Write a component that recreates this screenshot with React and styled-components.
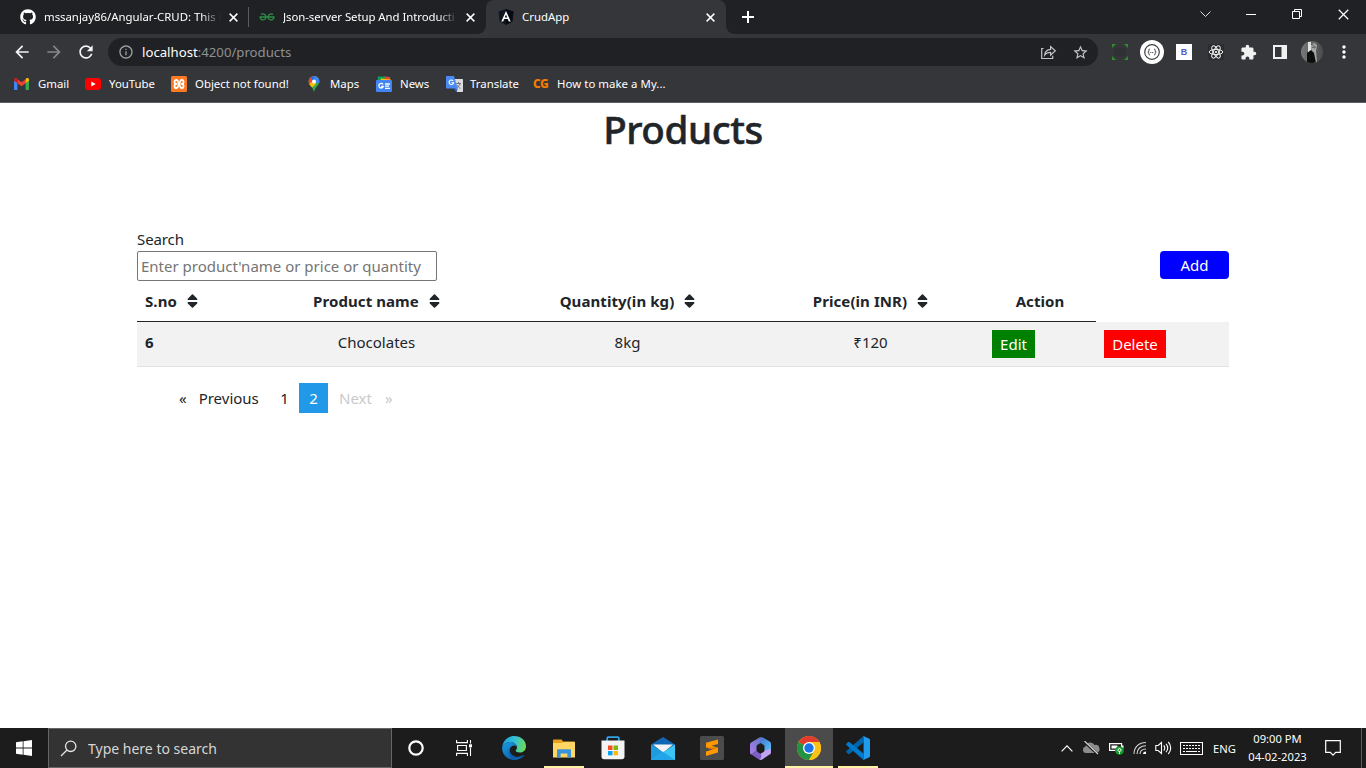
import React from "react";
import styled, { createGlobalStyle, css } from "styled-components";
import { FaGithub } from "react-icons/fa";
import {
  MdArrowBack,
  MdArrowForward,
  MdRefresh,
  MdInfoOutline,
  MdStarOutline,
  MdExtension,
  MdMoreVert,
} from "react-icons/md";

const GlobalStyle = createGlobalStyle`
  * { box-sizing: border-box; }
  body {
    margin: 0;
    background: #fff;
    font-family: "Noto Sans", "Open Sans", sans-serif;
    overflow: hidden;
  }
  svg { display: block; flex: none; }
`;

const Screen = styled.div`
  width: 1366px;
  height: 768px;
  display: flex;
  flex-direction: column;
`;

const Txt = styled.span`
  letter-spacing: ${(p) => p.$track || 0}px;
  white-space: nowrap;
`;

/* ---------- browser tabs ---------- */

const TabStrip = styled.div`
  height: 34px;
  flex: none;
  display: flex;
  background: #202124;
  color: #fff;
`;

const Tab = styled.div`
  width: ${(p) => p.$width}px;
  height: 34px;
  padding: 0 11px 0 ${(p) => p.$start}px;
  display: flex;
  align-items: center;
  position: relative;
  ${(p) =>
    p.$divided &&
    css`
      &::after {
        content: "";
        position: absolute;
        right: -1px;
        top: 7px;
        width: 1px;
        height: 20px;
        background: #5b5c5f;
      }
    `}
  ${(p) =>
    p.$active &&
    css`
      background: #35363a;
      border-radius: 8px 8px 0 0;
      &::before,
      &::after {
        content: "";
        position: absolute;
        bottom: 0;
        width: 8px;
        height: 8px;
      }
      &::before {
        left: -8px;
        background: radial-gradient(circle at 0 0, transparent 7.5px, #35363a 8px);
      }
      &::after {
        right: -8px;
        background: radial-gradient(circle at 100% 0, transparent 7.5px, #35363a 8px);
      }
    `}
`;

const TabTitle = styled.div`
  flex: 1;
  margin: 0 8px 0 8px;
  font-size: 11.4px;
  line-height: 18px;
  letter-spacing: ${(p) => p.$track || 0}px;
  white-space: nowrap;
  ${(p) =>
    p.$fade &&
    css`
      mask-image: linear-gradient(90deg, #000 calc(100% - ${p.$fade}px), transparent);
    `}
`;

const NewTab = styled.div`
  width: 44px;
  display: grid;
  place-items: center;
`;

const WindowControls = styled.div`
  margin-left: auto;
  height: 28px;
  display: flex;
`;

const WindowButton = styled.div`
  width: 46px;
  display: grid;
  place-items: center;
`;

/* ---------- toolbar ---------- */

const Toolbar = styled.div`
  height: 36px;
  flex: none;
  display: flex;
  align-items: center;
  background: #35363a;
  color: #fff;
  padding-left: 6px;
`;

const NavButton = styled.div`
  width: 32px;
  display: grid;
  place-items: center;
  color: ${(p) => (p.$disabled ? "#85868a" : "#f4f4f5")};
`;

const Omnibox = styled.div`
  width: 990px;
  height: 28px;
  margin-left: 6px;
  border-radius: 14px;
  background: #202124;
  display: flex;
  align-items: center;
  padding: 0 10px 0 10px;
  color: #9aa0a6;
`;

const Address = styled.div`
  flex: 1;
  margin-left: 8px;
  font-size: 13.2px;
  line-height: 20px;
  color: #8e9194;
  b {
    font-weight: 400;
    color: #fff;
  }
`;

const OmniboxAction = styled.div`
  width: 32px;
  display: grid;
  place-items: center;
  color: #c4c5c8;
  &:last-child {
    margin-right: -8px;
  }
`;

const Extensions = styled.div`
  display: flex;
  margin-left: 6px;
`;

const ExtensionSlot = styled.div`
  width: 32px;
  height: 28px;
  display: grid;
  place-items: center;
`;

const JsonBadge = styled.div`
  width: 24px;
  height: 24px;
  border-radius: 50%;
  background: #fff;
  display: grid;
  place-items: center;
`;

const BadgeB = styled.div`
  width: 16px;
  height: 16px;
  background: #fff;
  color: #5557c8;
  font: 700 9px/16px "Liberation Sans", sans-serif;
  text-align: center;
`;

/* ---------- bookmarks ---------- */

const BookmarkBar = styled.div`
  height: 33px;
  flex: none;
  display: flex;
  padding: 0 0 4px 14px;
  align-items: center;
  background: #35363a;
  border-bottom: 1px solid #5d5e62;
  color: #fff;
`;

const Bookmark = styled.div`
  width: ${(p) => p.$width}px;
  display: flex;
  align-items: center;
  gap: ${(p) => p.$gap || 8}px;
  font-size: 11.4px;
  line-height: 18px;
`;

const CgMark = styled.span`
  width: 16px;
  font-weight: 800;
  font-size: 12px;
  letter-spacing: -0.6px;
  color: #f57c00;
`;

/* ---------- page ---------- */

const Page = styled.main`
  flex: 1;
  color: #212529;
  font-size: 15px;
  line-height: 24px;
`;

const Title = styled.h1`
  margin: 0;
  height: 125px;
  padding-top: 2px;
  text-align: center;
  font-size: 38.6px;
  line-height: 48px;
  font-weight: 500;
  letter-spacing: -0.45px;
  -webkit-text-stroke: 0.5px #212529;
`;

const Content = styled.section`
  width: 1092px;
  margin: 0 auto;
`;

const SearchBar = styled.div`
  display: flex;
  justify-content: space-between;
  align-items: flex-start;
`;

const SearchLabel = styled.label`
  display: flex;
  flex-direction: column;
  height: 53px;
  line-height: 23px;
  letter-spacing: -0.1px;
`;

const SearchInput = styled.input`
  width: 300px;
  height: 30px;
  padding: 1px 3px;
  border: 1px solid #767676;
  border-radius: 2px;
  outline: none;
  font: 15px "Noto Sans", sans-serif;
  &::placeholder {
    color: #757575;
  }
`;

const Button = styled.button`
  height: 28px;
  width: ${(p) => p.$width}px;
  margin-top: ${(p) => p.$top || 0}px;
  padding: 0;
  border: 0;
  display: block;
  border-radius: ${(p) => p.$radius || 0}px;
  background: ${(p) => p.$color};
  color: #fff;
  font: 15px/28px "Noto Sans", sans-serif;
`;

const Table = styled.table`
  width: 1092px;
  table-layout: fixed;
  border-collapse: separate;
  border-spacing: 0;
`;

const HeadCell = styled.th`
  height: 41px;
  padding: 8px;
  text-align: ${(p) => p.$align || "center"};
  border-bottom: 1px solid ${(p) => (p.$blank ? "transparent" : "#212529")};
  font-weight: 700;
`;

const HeadLabel = styled.span`
  display: inline-flex;
  align-items: center;
  gap: 10px;
  vertical-align: top;
  white-space: nowrap;
  letter-spacing: 0.08px;
`;

const Cell = styled.td`
  height: 45px;
  padding: 8px;
  vertical-align: top;
  text-align: ${(p) => p.$align || "center"};
  font-weight: ${(p) => (p.$bold ? 700 : 400)};
  background: #f2f2f2;
  border-bottom: 1px solid #dee2e6;
`;

const Pagination = styled.nav`
  display: flex;
  margin: 16px 0 0 32px;
  height: 30px;
  line-height: 30px;
`;

const PageItem = styled.span`
  width: ${(p) => p.$width}px;
  padding: 0 10px 0 ${(p) => p.$start || 10}px;
  white-space: nowrap;
  display: flex;
  justify-content: ${(p) => p.$justify || "center"};
  gap: ${(p) => p.$gap || 12}px;
  color: ${(p) => (p.$current ? "#fefefe" : p.$disabled ? "#cacaca" : "#212529")};
  background: ${(p) => (p.$current ? "#2199e8" : "transparent")};
`;

/* ---------- taskbar ---------- */

const Taskbar = styled.footer`
  height: 40px;
  flex: none;
  display: flex;
  background: #1c1c1c;
  color: #fff;
`;

const TaskSlot = styled.div`
  width: ${(p) => p.$width || 49}px;
  height: 40px;
  display: grid;
  place-items: center;
  background: ${(p) => (p.$active ? "#4b4b4b" : "transparent")};
  position: relative;
  ${(p) =>
    p.$line &&
    css`
      &::after {
        content: "";
        position: absolute;
        bottom: 0;
        left: calc(50% - ${p.$line / 2}px);
        width: ${p.$line}px;
        height: 2px;
        background: #fdf3a7;
      }
    `}
`;

const TaskSearch = styled.div`
  width: 344px;
  height: 40px;
  padding-left: 11px;
  display: flex;
  align-items: center;
  gap: 11px;
  background: #333;
  border: 1px solid #666;
  color: #d6d6d6;
  font-size: 14px;
`;

const Tray = styled.div`
  margin-left: auto;
  display: flex;
  align-items: center;
`;

const TrayItem = styled.div`
  width: ${(p) => p.$width}px;
  padding-right: ${(p) => p.$end || 0}px;
  display: grid;
  place-items: center;
  font-size: 11.2px;
`;

const Clock = styled.div`
  width: 67px;
  text-align: center;
  font-size: 11.2px;
  line-height: 18px;
  margin-top: -1px;
  white-space: nowrap;
`;

const DesktopEdge = styled.div`
  width: 5px;
  height: 40px;
  border-left: 1px solid #5a5a5a;
`;

/* ---------- drawings ---------- */

const Cross = ({ size = 9, w = 1.6 }) => (
  <svg width={size} height={size} viewBox="0 0 10 10">
    <path d="M.7.7l8.6 8.6M9.3.7L.7 9.3" stroke="#fff" strokeWidth={w} />
  </svg>
);

const SortIcon = () => (
  <svg width="11" height="14" viewBox="0 0 11 14">
    <path
      d="M1.300 6h8.400c.7 0 1-.8.5-1.300L6.100.5a.9.900 0 0 0-1.200 0L.8 4.700C.3 5.200.6 6 1.300 6zM1.300 8.100h8.400c.7 0 1 .8.5 1.300l-4.100 4.100a.9.900 0 0 1-1.200 0L.8 9.400c-.5-.5-.2-1.300.5-1.300z"
      fill="#212529"
    />
  </svg>
);

const GfgIcon = () => (
  <svg width="16" height="16" viewBox="0 0 16 16" fill="none" stroke="#2f8d46" strokeWidth="1.3">
    <path d="M2 5.4c1.8-1.1 4.6-.5 4.9 2.2.2 2.2-1.4 3.4-3 3.3-1.7-.1-2.7-1.3-2.8-2.9H15c-.2 1.700-1.200 2.800-2.900 2.900-1.600.1-3.200-1.100-3-3.300.3-2.700 3.100-3.300 4.900-2.200" />
  </svg>
);

const AngularIcon = () => (
  <svg width="16" height="16" viewBox="0 0 16 16">
    <path d="M8 0l7.500 2.600-1.200 10L8 16l-6.300-3.400-1.200-10z" fill="#10151f" />
    <path d="M8 0l7.500 2.600-1.200 10L8 16z" fill="#060a12" />
    <path d="M8 1.900L3.300 12.400h1.900l1-2.400h3.600l1 2.400h1.900zm0 3.500l1.200 3H6.800z" fill="#fff" />
  </svg>
);

const ShareIcon = () => (
  <svg width="17" height="16" viewBox="0 0 17 16" fill="none" stroke="#c4c5c8" strokeWidth="1.200">
    <path d="M3.500 4.500H1.700v10h11v-2.700" />
    <path d="M4.700 11c.4-3.300 2.300-5.400 5.900-5.600V2.500l4.700 4.300-4.700 4.300V8.300c-2.600 0-4.500.8-5.900 2.700z" />
  </svg>
);

const FrameIcon = () => (
  <svg width="16" height="16" viewBox="0 0 16 16">
    <rect x="2" y="4" width="12" height="8" fill="#303134" />
    <path d="M0 0h4L0 4zM16 0h-4l4 4zM0 16h4l-4-4zM16 16h-4l4-4z" fill="#2f8f2a" />
  </svg>
);

const JsonRing = () => (
  <svg width="18" height="18" viewBox="0 0 18 18" fill="none" stroke="#3f4144" strokeWidth="1.200">
    <circle cx="9" cy="9" r="7.300" />
    <path d="M7 6c-1.400 0-1 1.200-1.200 2.100-.1.500-.5.900-1 .9.500 0 .9.400 1 .9.200.9-.2 2.100 1.200 2.100M11 6c1.400 0 1 1.200 1.200 2.100.1.500.5.900 1 .9-.5 0-.9.400-1 .9-.2.9.2 2.100-1.200 2.100" strokeWidth="1" />
    <path d="M7.300 9.500h3.400" strokeDasharray="1 .6" strokeWidth="1" />
  </svg>
);

const ReactIcon = () => (
  <svg width="16" height="16" viewBox="0 0 16 16" fill="none" stroke="#f1f1f1" strokeWidth="1">
    <rect width="16" height="16" rx="2" fill="#2b2c2f" stroke="none" />
    <ellipse cx="8" cy="8" rx="6.800" ry="2.600" />
    <ellipse cx="8" cy="8" rx="6.800" ry="2.600" transform="rotate(60 8 8)" />
    <ellipse cx="8" cy="8" rx="6.800" ry="2.600" transform="rotate(120 8 8)" />
    <circle cx="8" cy="8" r="1.100" fill="#fff" stroke="none" />
  </svg>
);

const PanelIcon = () => (
  <svg width="14" height="14" viewBox="0 0 14 14">
    <path d="M0 0h14v14H0zM2 2v10h6.500V2z" fill="#f1f1f1" fillRule="evenodd" />
  </svg>
);

const Avatar = () => (
  <svg width="22" height="22" viewBox="0 0 22 22">
    <defs>
      <clipPath id="avatar">
        <circle cx="11" cy="11" r="11" />
      </clipPath>
      <linearGradient id="avatarBg">
        <stop stopColor="#77797a" />
        <stop offset="1" stopColor="#4a4c4c" />
      </linearGradient>
    </defs>
    <g clipPath="url(#avatar)">
      <rect width="22" height="22" fill="url(#avatarBg)" />
      <path d="M7 1h3v9l-3 2z" fill="#e3e3e3" />
      <path d="M10 4c2-4 6-3 6 1l-1 5 1 12h-5z" fill="#a5a5a5" />
      <path d="M10 4c1.500-3 5-2.500 5.500 0M11 6l3 1M10.500 3l5 4" stroke="#5d5d5d" fill="none" />
      <path d="M6 12l4-3 3 3 2 10H6z" fill="#0d0d0d" />
    </g>
  </svg>
);

const GmailIcon = () => (
  <svg width="15" height="12" viewBox="0 0 15 12">
    <path d="M0 2v9c0 .6.400 1 1 1h2.400V4.500z" fill="#4285f4" />
    <path d="M15 2v9c0 .6-.4 1-1 1h-2.400V4.500z" fill="#34a853" />
    <path d="M3.400 1.200v4L7.500 8.300l4.100-3.100v-4L7.500 4.300z" fill="#ea4335" />
    <path d="M0 1.800C0 .2 1.800-.4 2.900.5l.5.500v4.200L0 2.700z" fill="#c5221f" />
    <path d="M15 1.800C15 .2 13.200-.4 12.100.5l-.5.500v4.200L15 2.700z" fill="#fbbc04" />
  </svg>
);

const YouTubeIcon = () => (
  <svg width="16" height="12" viewBox="0 0 16 12">
    <rect width="16" height="12" rx="3" fill="#f00" />
    <path d="M6.300 3.400v5.200L10.700 6z" fill="#fff" />
  </svg>
);

const XamppIcon = () => (
  <svg width="16" height="16" viewBox="0 0 16 16">
    <rect width="16" height="16" rx="1.500" fill="#fb7a24" />
    <path
      d="M6.300 7.900H5A1.700 1.700 0 0 1 3.600 6.200V5.400c0-1 .6-1.600 1.500-1.600.8 0 1.200.300 1.600 1L9.400 11c.4.800.8 1.200 1.600 1.200.900 0 1.500-.6 1.500-1.600v-.8A1.800 1.800 0 0 0 11 7.900H9.700M9.700 7.900H11a1.800 1.800 0 0 0 1.500-1.700V5.400c0-1-.6-1.600-1.500-1.600-.8 0-1.200.3-1.600 1L6.700 11c-.4.8-.8 1.200-1.600 1.200-.9 0-1.500-.6-1.500-1.600v-.8A1.700 1.700 0 0 1 5 7.900h1.300"
      fill="none"
      stroke="#fff"
      strokeWidth="1.800"
    />
  </svg>
);

const MapsIcon = () => (
  <svg width="16" height="16" viewBox="0 0 16 16">
    <defs>
      <clipPath id="pin">
        <path d="M8 0a5.400 5.400 0 0 0-5.400 5.400c0 2.300 1.500 3.700 3 5.500C6.800 12.400 7.200 13.500 8 16c.8-2.500 1.200-3.600 2.400-5.100 1.500-1.800 3-3.200 3-5.500A5.400 5.400 0 0 0 8 0z" />
      </clipPath>
    </defs>
    <g clipPath="url(#pin)">
      <rect width="16" height="16" fill="#34a853" />
      <path d="M0 12L13 0H0z" fill="#ea4335" />
      <path d="M4 1l4 5 6-6z" fill="#1a73e8" />
      <path d="M7 0l2 3.500L6.500 6.500 14 7V0z" fill="#4285f4" />
      <path d="M2 9l6-5 2 4-5.500 5z" fill="#fbbc04" />
    </g>
    <circle cx="8" cy="5.400" r="2" fill="#fff" />
  </svg>
);

const NewsIcon = () => (
  <svg width="16" height="16" viewBox="0 0 16 16">
    <path d="M2 .500h8v4H1.500z" fill="#0f9d58" />
    <path d="M9 .500l5 .5V5H8z" fill="#ea4335" />
    <path d="M5 2.500l10 1V6H4z" fill="#fbbc04" />
    <rect y="4" width="16" height="12" rx="1" fill="#4285f4" />
    <path d="M7 8.300a2.300 2.300 0 1 0 .3 2.200H5.200M9 8h5M9 10.200h4M9 12.400h5" fill="none" stroke="#fff" strokeWidth="1.300" />
  </svg>
);

const TranslateIcon = () => (
  <svg width="17" height="16" viewBox="0 0 17 16">
    <path d="M7 3h9c.6 0 1 .4 1 1v11c0 .6-.4 1-1 1h-5z" fill="#dadce0" />
    <path d="M10 7.500h5M12.500 6v1.500M14 7.500c-.4 2-1.800 3.600-3.400 4.500M11 9c.6 1.400 2 2.700 3.500 3.300" fill="none" stroke="#777" />
    <path d="M8 12.500h4L10.200 16z" fill="#3367d6" />
    <path d="M1 0h7l3.700 12.500H1c-.6 0-1-.4-1-1V1c0-.6.400-1 1-1z" fill="#4a8af4" />
    <path d="M7.200 4.900a2.300 2.300 0 1 0 .4 1.900H5.300" fill="none" stroke="#fff" strokeWidth="1.100" />
  </svg>
);

const WindowsIcon = () => (
  <svg width="16" height="16" viewBox="0 0 16 16" fill="#fff">
    <path d="M0 2.200l6.700-.9v6.200H0zM7.500 1.200L16 0v7.500H7.500zM0 8.400h6.700v6.300L0 13.800zM7.500 8.400H16V16l-8.500-1.200z" />
  </svg>
);

const MagnifierIcon = () => (
  <svg width="17" height="17" viewBox="0 0 17 17" fill="none" stroke="#e6e6e6" strokeWidth="1.300">
    <circle cx="10.700" cy="6.300" r="5.200" />
    <path d="M7 10L1 16" />
  </svg>
);

const TaskViewIcon = () => (
  <svg width="17" height="16" viewBox="0 0 17 16" fill="none" stroke="#fff" strokeWidth="1.100">
    <path d="M.6 0v2.600h10.800V0M.6 16v-2.600h10.800V16M1.600 5.500h8.800v5H1.600zM14.500 0v16" />
    <path d="M14.500 3.500v4" stroke="#1c1c1c" strokeWidth="3" />
    <path d="M13 4.300h3v3h-3z" fill="#fff" stroke="none" />
  </svg>
);

const EdgeIcon = () => (
  <svg width="24" height="24" viewBox="0 0 24 24">
    <defs>
      <linearGradient id="edgeTop" x1="0" x2="1" y1=".3" y2=".5">
        <stop stopColor="#1a9fde" />
        <stop offset=".5" stopColor="#35c1d5" />
        <stop offset="1" stopColor="#6bdc55" />
      </linearGradient>
      <linearGradient id="edgeBody" x1="0" y1="0" x2=".7" y2="1">
        <stop stopColor="#1b9de2" />
        <stop offset="1" stopColor="#0c59a4" />
      </linearGradient>
    </defs>
    <path d="M.3 10.500C1.200 4.500 6 0 12 0c7 0 12 4.800 12 10.200 0 3.800-2.600 6.300-6 6.300-2.700 0-4.400-.9-4.400-1.700 0-.6 1.400-1 1.400-3.200C15 8.500 12 6 8.300 6 4.800 6 2 7.700.3 10.500z" fill="url(#edgeTop)" />
    <path d="M.2 11C1.700 7.600 5 6 8.300 6c3.500 0 6.300 2.300 6.700 5-.6-.8-1.700-1.400-3-1.400-2.600 0-4.200 2.200-4.200 4.600 0 3.800 3.200 6.700 7.400 6.700 2.800 0 4.800-1 6.400-1.900.5-.3.900.1.600.6C20.200 22.200 16.500 24 12.500 24 5.300 24-.6 18 .2 11z" fill="url(#edgeBody)" />
    <path d="M8.500 11.500c-2 5 1.500 9.800 7.300 9.600 2.500-.1 4.400-1 6-2-2 3.100-5.600 4.900-9.300 4.900-5-1.500-7.500-9-4-12.500z" fill="#0f5eab" />
  </svg>
);

const FolderIcon = () => (
  <svg width="22" height="19" viewBox="0 0 22 19">
    <path d="M0 1.500C0 .8.400.5 1 .5h7.500l1.500 2h11c.6 0 1 .3 1 1V9H0z" fill="#e5a21c" />
    <path d="M0 4h9l1-1h12v15.500H0z" fill="#ffd563" />
    <path d="M4 18.500v-7c0-.8.500-1.300 1.300-1.300h11.400c.8 0 1.300.5 1.300 1.300v7h-3.600v-4H7.600v4z" fill="#3793db" />
  </svg>
);

const StoreIcon = () => (
  <svg width="24" height="24" viewBox="0 0 24 24">
    <path d="M6.200 5V2.200c0-.7.4-1.100 1.100-1.100h9.400c.7 0 1.100.4 1.100 1.100V5" fill="none" stroke="#2ea5e6" strokeWidth="1.800" />
    <path d="M.5 4.500h23v16.300c0 1.500-1 2.500-2.500 2.500H3c-1.500 0-2.500-1-2.500-2.500z" fill="#f4f4f4" />
    <path d="M7 9.500h4.500V14H7z" fill="#f25022" />
    <path d="M12.500 9.500H17V14h-4.500z" fill="#7fba00" />
    <path d="M7 15h4.500v4.300H7z" fill="#00a4ef" />
    <path d="M12.500 15H17v4.300h-4.500z" fill="#ffb900" />
  </svg>
);

const MailIcon = () => (
  <svg width="24" height="23" viewBox="0 0 24 23">
    <path d="M0 7.500L12 0l12 7.500v3H0z" fill="#1068b4" />
    <path d="M2 7.500h20L12 16z" fill="#f5f5f5" />
    <path d="M0 7.500l12 7.500v8H0z" fill="#1f9be2" />
    <path d="M24 7.500V23H0l12-8z" fill="#3cc4f5" />
    <path d="M12 15l12 8H0z" fill="#22a4e8" />
  </svg>
);

const SublimeIcon = () => (
  <svg width="24" height="24" viewBox="0 0 24 24">
    <rect width="24" height="24" rx="1.500" fill="#4b4b4b" />
    <path d="M6 6.700L18 3.500v4.400l-6.500 1.800 6.500 2v4.700L6 20v-4.500l6.600-1.900L6 11.500z" fill="#ff9800" />
    <path d="M6 11.500l12 .2-5.400 1.900z" fill="#d97700" />
  </svg>
);

const OfficeIcon = () => (
  <svg width="21" height="23" viewBox="0 0 21 23">
    <defs>
      <linearGradient id="officeA" x1="0" y1="1" x2="1" y2="0">
        <stop stopColor="#b07de8" />
        <stop offset="1" stopColor="#5a78c8" />
      </linearGradient>
      <linearGradient id="officeB" x1="0" y1="0" x2="1" y2="1">
        <stop stopColor="#3f6fd0" />
        <stop offset="1" stopColor="#5cc4fa" />
      </linearGradient>
    </defs>
    <path d="M9.500.600L1.500 5.200C.5 5.800 0 6.600 0 7.700v7.500c0 1 .5 1.900 1.400 2.400L6.500 14V9.500c0-.8.4-1.400 1-1.800l6-3.400V2C12.500.2 10.800-.1 9.500.6z" fill="url(#officeA)" />
    <path d="M11 .300c.9-.1 1.600.100 2.300.500l6.300 3.700c.9.600 1.400 1.400 1.400 2.500v6l-6.500 1V9.500c0-.8-.4-1.400-1-1.800L9.500 5.500c1.500-1.500 2.500-3.200 1.500-5.200z" fill="url(#officeB)" />
    <path d="M1.400 17.600L7 13.800c0 .5.300 1 .9 1.400l2.600 1.500 4.500 3.800-3 2c-1 .6-2 .6-3 0z" fill="#7d5fc7" />
    <path d="M21 12v3.200c0 1.100-.5 1.900-1.400 2.400L12 22.400c-.9.500-1.700.5-2.500 0 2-1 2.500-3.700 1-5.700l3-1.700c.6-.4 1-.9 1-1.600z" fill="#c0a4f4" />
  </svg>
);

const ChromeIcon = () => (
  <svg width="24" height="24" viewBox="0 0 24 24">
    <circle cx="12" cy="12" r="12" fill="#fbc116" />
    <path d="M12 12L1.600 6A12 12 0 0 1 22.400 6H12z" fill="#e33b2e" />
    <path d="M12 12L1.600 6A12 12 0 0 0 12 24l5.200-9z" fill="#229342" />
    <path d="M12 6h10.400A12 12 0 0 1 12 24l5.200-9z" fill="#fbc116" />
    <circle cx="12" cy="12" r="6" fill="#fff" />
    <circle cx="12" cy="12" r="4.700" fill="#1a73e8" />
  </svg>
);

const VsCodeIcon = () => (
  <svg width="24" height="24" viewBox="0 0 24 24">
    <path d="M17.500 0v6.500L3.400 17.900c-.4.300-.9.300-1.200 0L.4 16.300a.8.800 0 0 1 0-1.200z" fill="#0065a9" />
    <path d="M17.500 24v-6.500L3.400 6.100c-.4-.3-.9-.3-1.200 0L.4 7.700a.8.800 0 0 0 0 1.200z" fill="#007acc" />
    <path d="M17.500 0L23.300 2.800c.4.200.7.600.7 1.100v16.200c0 .5-.3.900-.7 1.100L17.500 24c-.5.200-1 .1-1.400-.3.600.6 1.500.2 1.500-.6V.9c0-.8-.9-1.200-1.500-.6.400-.4.900-.5 1.400-.3z" fill="#1f9cf0" />
  </svg>
);

const CloudOffIcon = () => (
  <svg width="18" height="14" viewBox="0 0 18 14">
    <path d="M4 12a3.300 3.300 0 0 1-.5-6.500A4.800 4.800 0 0 1 12.500 4a3.500 3.500 0 0 1 1.800 8z" fill="#8c8c8c" />
    <path d="M2 .5L15.500 13" stroke="#1c1c1c" strokeWidth="2.500" />
    <path d="M2.500 0L16 13" stroke="#ddd" strokeWidth="1.100" />
  </svg>
);

const BatteryIcon = () => (
  <svg width="17" height="13" viewBox="0 0 17 13">
    <path d="M1.600 1.600h12v6.800h-12z" fill="none" stroke="#fff" strokeWidth="1.200" />
    <path d="M3.500 3.500h6v3h-6zM14 3.500h1.500v3H14z" fill="#fff" />
    <circle cx="11.500" cy="8.500" r="4.300" fill="#169b2c" />
    <path d="M11.500 6l1.800 2.300-1.800 1.500-1.800-1.500zM11.500 9v3" stroke="#fff" fill="none" />
  </svg>
);

const WifiIcon = () => (
  <svg width="14" height="14" viewBox="0 0 14 14" fill="none" stroke="#d4d4d4" strokeWidth="1.100">
    <path d="M1 13C1 6 6 1.500 13 1.500M4 13c0-5 3.500-8.300 9-8.300M7 13c0-3 2-5 6-5" />
    <path d="M10 13c0-1.500 1-2.500 3-2.500V13z" fill="#fff" stroke="none" />
  </svg>
);

const SpeakerIcon = () => (
  <svg width="17" height="14" viewBox="0 0 17 14" fill="none" stroke="#fff" strokeWidth="1.100">
    <path d="M.8 4.500h2.400L6.500 1.500v11L3.200 9.500H.8zM8.700 4.500a3.500 3.500 0 0 1 0 5M11 2.800a6 6 0 0 1 0 8.400M13.300 1a8.700 8.700 0 0 1 0 12" />
  </svg>
);

const KeyboardIcon = () => (
  <svg width="23" height="13" viewBox="0 0 23 13" fill="none" stroke="#fff">
    <rect x=".5" y=".5" width="22" height="12" />
    <path d="M3 3.500h17M3 6.500h17" strokeDasharray="2 1" />
    <path d="M3 9.500h2M6 9.500h11M18 9.500h2" />
  </svg>
);

const NoticeIcon = () => (
  <svg width="16" height="17" viewBox="0 0 16 17" fill="none" stroke="#fff" strokeWidth="1.200">
    <path d="M.7.700h14.600v11.600h-4.600L8 15.200l-2.700-2.900H.7z" />
  </svg>
);

/* ---------- data ---------- */

const columns = [
  { label: "S.no", width: 118, align: "left", sortable: true },
  { label: "Product name", width: 243, sortable: true },
  { label: "Quantity(in kg)", width: 259, sortable: true },
  { label: "Price(in INR)", width: 227, sortable: true },
  { label: "Action", width: 112 },
  { label: "", width: 133, blank: true },
];

const bookmarks = [
  { label: "Gmail", width: 71, gap: 9, icon: <GmailIcon /> },
  { label: "YouTube", width: 86, gap: 8, icon: <YouTubeIcon /> },
  { label: "Object not found!", width: 135, icon: <XamppIcon /> },
  { label: "Maps", width: 70, icon: <MapsIcon /> },
  { label: "News", width: 70, icon: <NewsIcon /> },
  { label: "Translate", width: 87, gap: 7, icon: <TranslateIcon /> },
  { label: "How to make a My...", width: 150, track: 0.05, icon: <CgMark>CG</CgMark> },
];

function BrowserChrome() {
  return (
    <>
      <TabStrip>
        <Tab $width={248} $start={20} $divided>
          <FaGithub size={16} />
          <TabTitle $fade={20} $track={-0.02}>mssanjay86/Angular-CRUD: This i</TabTitle>
          <Cross />
        </Tab>
        <Tab $width={238} $start={11}>
          <GfgIcon />
          <TabTitle $fade={20} $track={-0.06}>Json-server Setup And Introducti</TabTitle>
          <Cross />
        </Tab>
        <Tab $width={240} $start={12} $active>
          <AngularIcon />
          <TabTitle>CrudApp</TabTitle>
          <Cross />
        </Tab>
        <NewTab>
          <svg width="12" height="12" viewBox="0 0 12 12">
            <path d="M6 0v12M0 6h12" stroke="#fff" strokeWidth="2" />
          </svg>
        </NewTab>
        <WindowControls>
          <WindowButton>
            <svg width="11" height="7" viewBox="0 0 11 7">
              <path d="M.5.500l5 5 5-5" fill="none" stroke="#ddd" />
            </svg>
          </WindowButton>
          <WindowButton>
            <svg width="10" height="1" viewBox="0 0 10 1">
              <path d="M0 .5h10" stroke="#fff" />
            </svg>
          </WindowButton>
          <WindowButton>
            <svg width="10" height="10" viewBox="0 0 10 10" fill="none" stroke="#fff">
              <path d="M.5 2.500h7v7h-7zM2.500 2.500v-2h7v7h-2" />
            </svg>
          </WindowButton>
          <WindowButton>
            <Cross size={11} w={1.1} />
          </WindowButton>
        </WindowControls>
      </TabStrip>

      <Toolbar>
        <NavButton><MdArrowBack size={20} /></NavButton>
        <NavButton $disabled><MdArrowForward size={20} /></NavButton>
        <NavButton><MdRefresh size={20} /></NavButton>
        <Omnibox>
          <MdInfoOutline size={16} />
          <Address><b>localhost</b>:4200/products</Address>
          <OmniboxAction><ShareIcon /></OmniboxAction>
          <OmniboxAction><MdStarOutline size={17} /></OmniboxAction>
        </Omnibox>
        <Extensions>
          <ExtensionSlot><FrameIcon /></ExtensionSlot>
          <ExtensionSlot><JsonBadge><JsonRing /></JsonBadge></ExtensionSlot>
          <ExtensionSlot><BadgeB>B</BadgeB></ExtensionSlot>
          <ExtensionSlot><ReactIcon /></ExtensionSlot>
          <ExtensionSlot><MdExtension size={17} color="#f1f1f1" /></ExtensionSlot>
          <ExtensionSlot><PanelIcon /></ExtensionSlot>
          <ExtensionSlot><Avatar /></ExtensionSlot>
          <ExtensionSlot><MdMoreVert size={20} /></ExtensionSlot>
        </Extensions>
      </Toolbar>

      <BookmarkBar>
        {bookmarks.map((b) => (
          <Bookmark key={b.label} $width={b.width} $gap={b.gap}>
            {b.icon}
            <Txt $track={b.track}>{b.label}</Txt>
          </Bookmark>
        ))}
      </BookmarkBar>
    </>
  );
}

function ProductsPage() {
  return (
    <Page>
      <Title>Products</Title>
      <Content>
        <SearchBar>
          <SearchLabel>
            Search
            <SearchInput placeholder="Enter product'name or price or quantity" />
          </SearchLabel>
          <Button $color="#0000ff" $width={69} $top={23} $radius={4}>Add</Button>
        </SearchBar>
        <Table>
          <colgroup>
            {columns.map((c) => <col key={c.label} style={{ width: c.width }} />)}
          </colgroup>
          <thead>
            <tr>
              {columns.map((c) => (
                <HeadCell key={c.label} $align={c.align} $blank={c.blank}>
                  <HeadLabel>
                    {c.label}
                    {c.sortable && <SortIcon />}
                  </HeadLabel>
                </HeadCell>
              ))}
            </tr>
          </thead>
          <tbody>
            <tr>
              <Cell $align="left" $bold>6</Cell>
              <Cell>Chocolates</Cell>
              <Cell>8kg</Cell>
              <Cell>₹120</Cell>
              <Cell><Button $color="#008000" $width={43}>Edit</Button></Cell>
              <Cell><Button $color="#ff0000" $width={62}>Delete</Button></Cell>
            </tr>
          </tbody>
        </Table>
        <Pagination>
          <PageItem $width={101} $justify="flex-start"><span>«</span><span>Previous</span></PageItem>
          <PageItem $width={29}>1</PageItem>
          <PageItem $width={29} $current>2</PageItem>
          <PageItem $width={80} $start={11} $gap={13} $justify="flex-start" $disabled><span>Next</span><span>»</span></PageItem>
        </Pagination>
      </Content>
    </Page>
  );
}

function WindowsTaskbar() {
  return (
    <Taskbar>
      <TaskSlot $width={48}><WindowsIcon /></TaskSlot>
      <TaskSearch>
        <MagnifierIcon />
        <Txt>Type here to search</Txt>
      </TaskSearch>
      <TaskSlot $width={48}>
        <svg width="16" height="16" viewBox="0 0 16 16">
          <circle cx="8" cy="8" r="6.700" fill="none" stroke="#fff" strokeWidth="2.200" />
        </svg>
      </TaskSlot>
      <TaskSlot $width={48}><TaskViewIcon /></TaskSlot>
      <TaskSlot $width={52}><EdgeIcon /></TaskSlot>
      <TaskSlot $width={48} $line={40}><FolderIcon /></TaskSlot>
      <TaskSlot $width={50}><StoreIcon /></TaskSlot>
      <TaskSlot><MailIcon /></TaskSlot>
      <TaskSlot><SublimeIcon /></TaskSlot>
      <TaskSlot><OfficeIcon /></TaskSlot>
      <TaskSlot $width={48} $line={48} $active><ChromeIcon /></TaskSlot>
      <TaskSlot $width={50} $line={40}><VsCodeIcon /></TaskSlot>
      <Tray>
        <TrayItem $width={28}>
          <svg width="12" height="7" viewBox="0 0 12 7">
            <path d="M.6 6.300L6 .9l5.400 5.400" fill="none" stroke="#fff" strokeWidth="1.200" />
          </svg>
        </TrayItem>
        <TrayItem $width={20}><CloudOffIcon /></TrayItem>
        <TrayItem $width={30}><BatteryIcon /></TrayItem>
        <TrayItem $width={18}><WifiIcon /></TrayItem>
        <TrayItem $width={28}><SpeakerIcon /></TrayItem>
        <TrayItem $width={28}><KeyboardIcon /></TrayItem>
        <TrayItem $width={39}><Txt>ENG</Txt></TrayItem>
        <Clock>09:00 PM<br />04-02-2023</Clock>
        <TrayItem $width={50} $end={6}><NoticeIcon /></TrayItem>
        <DesktopEdge />
      </Tray>
    </Taskbar>
  );
}

export default function App() {
  return (
    <Screen>
      <GlobalStyle />
      <BrowserChrome />
      <ProductsPage />
      <WindowsTaskbar />
    </Screen>
  );
}
